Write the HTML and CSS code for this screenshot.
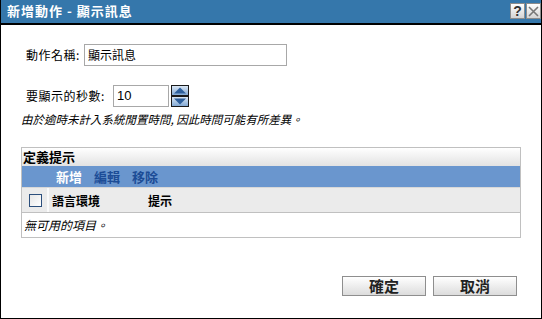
FILE: index.html
```html
<!DOCTYPE html>
<html>
<head>
<meta charset="utf-8">
<link rel="stylesheet" href="styles.css">
</head>
<body>
<div class="dialog">
  <div class="titlebar">
    <span class="title">新增動作 - 顯示訊息</span>
    <div class="tbtns">
      <span class="tbtn help">?</span>
      <span class="tbtn close"><svg width="11" height="11" viewBox="0 0 11 11"><path d="M1 1L10 10M10 1L1 10" stroke="#777" stroke-width="1.6" fill="none"/></svg></span>
    </div>
  </div>
  <div class="content">
    <div class="row row1">
      <label class="lbl l1">動作名稱:</label>
      <div class="input name">顯示訊息</div>
    </div>
    <div class="row row2">
      <label class="lbl l2">要顯示的秒數:</label>
      <div class="input secs">10</div>
      <div class="spin">
        <svg width="18" height="22" viewBox="0 0 18 22">
          <defs>
            <linearGradient id="g" x1="0" y1="0" x2="0" y2="1">
              <stop offset="0" stop-color="#dfeaf6"/>
              <stop offset="1" stop-color="#7ea6d3"/>
            </linearGradient>
          </defs>
          <rect x="0.5" y="0.5" width="17" height="10" fill="url(#g)" stroke="#1a1a1a"/>
          <rect x="0.5" y="11.5" width="17" height="10" fill="url(#g)" stroke="#1a1a1a"/>
          <path d="M3 8.5L9 2.5L15 8.5Z" fill="#2d5f9c"/>
          <path d="M3 13.5L9 19.5L15 13.5Z" fill="#2d5f9c"/>
        </svg>
      </div>
    </div>
    <div class="note">由於逾時未計入系統閒置時間, 因此時間可能有所差異。</div>
    <div class="table">
      <div class="caption">定義提示</div>
      <div class="toolbar">
        <span class="tool active">新增</span>
        <span class="tool">編輯</span>
        <span class="tool">移除</span>
      </div>
      <div class="colhead">
        <div class="chkcell"><span class="chk"></span></div>
        <div class="col c1">語言環境</div>
        <div class="col c2">提示</div>
      </div>
      <div class="empty">無可用的項目。</div>
    </div>
    <div class="actions">
      <button class="btn">確定</button>
      <button class="btn">取消</button>
    </div>
  </div>
</div>
</body>
</html>
```
FILE: styles.css
```css
* { box-sizing: border-box; }
html, body { margin: 0; padding: 0; background: #fff; }
body { font-family: "Noto Sans CJK TC", "Liberation Sans", sans-serif; font-size: 12px; color: #000; }

.dialog {
  width: 542px;
  height: 319px;
  border-left: 1px solid #000;
  border-right: 1px solid #000;
  border-bottom: 1px solid #000;
  display: flex;
  flex-direction: column;
}

.titlebar {
  height: 25px;
  background: #3577ab;
  border-bottom: 2px solid #000;
  display: flex;
  align-items: center;
  justify-content: space-between;
  padding-left: 6px;
  padding-right: 0;
}
.title { color: #fff; font-weight: bold; font-size: 13px; line-height: 16px; margin-top: -1px; letter-spacing: 1px; }
.tbtns { display: flex; gap: 1px; align-self: flex-start; margin-top: 3px; }
.tbtn {
  width: 15px; height: 16px;
  background: linear-gradient(#ffffff, #d4d4d4);
  border: 1px solid #8c8c8c;
  display: flex; align-items: center; justify-content: center;
  font-family: "Liberation Sans", sans-serif;
}
.help { font-weight: bold; font-size: 14px; color: #333; }

.content { padding: 19px 20px 0 20px; display: flex; flex-direction: column; flex: 1; }

.row { display: flex; align-items: center; padding-left: 5px; }
.lbl { line-height: 14px; letter-spacing: 0.5px; }
.l1 { width: 58px; }
.l2 { width: 87px; }
.input {
  height: 22px;
  border: 1px solid #a8a8a8;
  padding-left: 3px;
  line-height: 20px;
  font-size: 12px;
}
.name { width: 203px; }
.row2 { margin-top: 19px; }
.secs { width: 56px; font-family: "Liberation Sans", sans-serif; font-size: 13px; }
.spin { margin-left: 2px; height: 22px; display: flex; }

.note { font-style: italic; margin-top: 5px; line-height: 14px; font-size: 11.5px; }

.table {
  margin-top: 21px;
  width: 500px;
  border: 1px solid #c0c0c0;
}
.caption {
  height: 18px;
  line-height: 18px;
  font-weight: bold;
  font-size: 13px;
  padding-left: 1px;
  background: linear-gradient(#ffffff, #e2e2e2);
}
.toolbar {
  height: 22px;
  background: #6a96ce;
  display: flex;
  align-items: center;
  padding-left: 34px;
  gap: 12px;
  border-bottom: 1px solid #d8d8d8;
  font-size: 13px;
}
.tool { font-weight: bold; color: #1c4c96; }
.tool.active { color: #fff; }
.colhead {
  height: 25px;
  background: #ebebeb;
  display: flex;
  align-items: center;
  border-bottom: 1px solid #c0c0c0;
}
.chkcell {
  width: 27px;
  height: 100%;
  border-right: 2px solid #fafafa;
  display: flex; align-items: center; justify-content: center;
  padding-left: 1px;
}
.chk {
  width: 13px; height: 13px;
  border: 1px solid #2c4f7c;
  background: linear-gradient(135deg, #e6e6e6, #ffffff);
}
.col { font-weight: bold; }
.c1 { margin-left: 3px; width: 96px; }
.empty {
  height: 24px;
  line-height: 24px;
  font-style: italic;
  padding-left: 2px;
}

.actions {
  margin-top: 38px;
  display: flex;
  justify-content: flex-end;
  gap: 7px;
  padding-right: 4px;
}
.btn {
  width: 84px;
  height: 20px;
  border: 1px solid #8e8e8e;
  background: linear-gradient(#ffffff, #dcdcdc);
  font-family: "Noto Sans CJK TC", sans-serif;
  font-weight: bold;
  font-size: 15px;
  line-height: 16px;
  color: #222;
  padding: 0;
}
```
